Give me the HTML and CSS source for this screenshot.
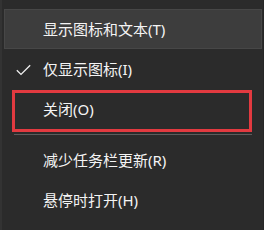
FILE: index.html
```html
<!DOCTYPE html>
<html lang="zh-CN">
<head>
<meta charset="utf-8">
<link rel="stylesheet" href="styles.css">
</head>
<body>
<div class="menu">
  <div class="item hover"><span class="check"></span><span class="label">显示图标和文本(T)</span></div>
  <div class="item"><span class="check"><svg width="15" height="12" viewBox="0 0 15 12"><path d="M0.8 6.2 L5 10.4 L14.2 1.2" fill="none" stroke="#f0f0f0" stroke-width="1.3"/></svg></span><span class="label">仅显示图标(I)</span></div>
  <div class="item"><span class="check"></span><span class="label">关闭(O)</span></div>
  <div class="sep"></div>
  <div class="item"><span class="check"></span><span class="label">减少任务栏更新(R)</span></div>
  <div class="item"><span class="check"></span><span class="label">悬停时打开(H)</span></div>
  <div class="mark"></div>
</div>
</body>
</html>
```
FILE: styles.css
```css
html, body {
  margin: 0;
  padding: 0;
  background: #2b2b2b;
}
body {
  width: 264px;
  height: 230px;
  overflow: hidden;
}
.menu {
  position: relative;
  box-sizing: border-box;
  width: 264px;
  height: 230px;
  padding: 9px 2px 10px 2px;
  border-left: 2px solid #333333;
  border-right: 1px solid #262626;
  font-family: "Noto Sans", "Noto Sans CJK SC", sans-serif;
  font-size: 15px;
  color: #f4f4f4;
  display: flex;
  flex-direction: column;
}
.item {
  height: 40px;
  display: flex;
  align-items: center;
  box-sizing: border-box;
}
.item.hover {
  background: #3d3d3d;
  border: 1px solid #474747;
  margin-right: -1px;
}
.check {
  width: 39px;
  flex: none;
  display: flex;
  justify-content: flex-end;
  padding-right: 0;
  box-sizing: border-box;
  padding-left: 12px;
}
.check svg {
  margin-right: 12px;
  margin-top: 1px;
}
.hover .check {
  width: 38px;
}
.label {
  line-height: 20px;
  white-space: nowrap;
}
.sep {
  height: 11px;
  flex: none;
  display: flex;
  align-items: center;
  padding: 0 9px 0 10px;
}
.sep::before {
  content: "";
  display: block;
  flex: 1;
  height: 1px;
  background: #5c5c5c;
  margin-top: 0;
}
.mark {
  position: absolute;
  left: 10px;
  top: 90px;
  width: 240px;
  height: 42px;
  box-sizing: border-box;
  border: 3px solid #e23a40;
}
```
